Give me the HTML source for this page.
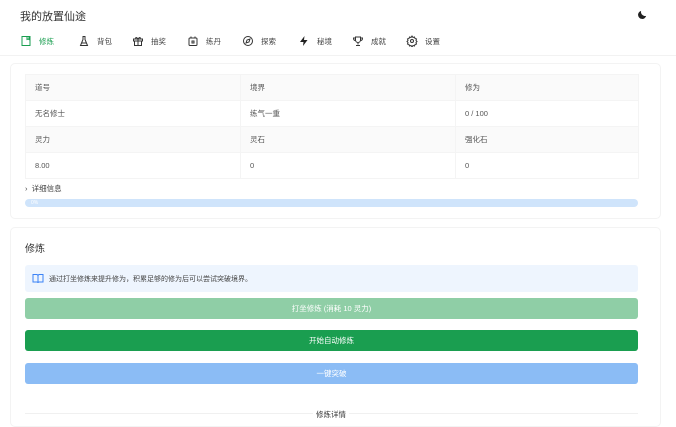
<!DOCTYPE html>
<html><head><meta charset="utf-8"><style>
*{box-sizing:border-box;margin:0;padding:0}
body{width:676px;height:418px;overflow:hidden;background:#fff;font-family:"Liberation Sans","Noto Sans CJK SC",sans-serif;color:#333;position:relative}
.abs{position:absolute}
.title{left:20px;top:8px;font-size:11px;color:#333}
.nav{top:35px;left:20px;display:flex;font-size:7.5px;color:#444}
.nav div{display:flex;align-items:center;margin-right:0}
.nav svg{width:12px;height:12px;margin-right:7px}
.hdr{left:0;top:55px;width:676px;height:1px;background:#f2f2f2}
.card{border:1px solid #f3f3f3;border-radius:5px;background:#fff}
table{border-collapse:collapse;font-size:7.5px;color:#555;table-layout:fixed}
td{height:26px;padding-left:9px;border:1px solid #f4f4f4}
tr.h td{background:#fafafa}
.btn{left:25px;width:613px;height:21px;border-radius:3px;color:#fff;font-size:7.5px;display:flex;align-items:center;justify-content:center}
</style></head><body>
<div class="abs title">我的放置仙途</div>
<svg class="abs" style="left:637px;top:9px" width="11" height="11" viewBox="0 0 24 24"><path d="M20 15A9 9 0 0 1 9 4a9 9 0 1 0 11 11z" fill="#222"/></svg>
<div class="abs nav">
<div style="color:#1a9e50;width:58px"><svg viewBox="0 0 24 24" fill="none" stroke="#1a9e50" stroke-width="2"><rect x="4" y="3" width="16" height="18"/><path d="M14 3v6l2-1 2 1V3"/></svg>修炼</div>
<div style="width:54px"><svg viewBox="0 0 24 24" fill="none" stroke="#333" stroke-width="2"><path d="M9 3h6M10 3v6l-5 12h14l-5-12V3M7 16h10"/></svg>背包</div>
<div style="width:55px"><svg viewBox="0 0 24 24" fill="none" stroke="#333" stroke-width="2"><rect x="3" y="8" width="18" height="4"/><rect x="5" y="12" width="14" height="9"/><path d="M12 8v13M12 8C9 3 6 5 8 8M12 8c3-5 6-3 4 0"/></svg>抽奖</div>
<div style="width:55px"><svg viewBox="0 0 24 24" fill="none" stroke="#333" stroke-width="2"><rect x="4" y="6" width="16" height="15" rx="2"/><path d="M8 6V3M16 6V3"/><rect x="10" y="12" width="4" height="4"/></svg>练丹</div>
<div style="width:56px"><svg viewBox="0 0 24 24" fill="none" stroke="#333" stroke-width="2"><circle cx="12" cy="12" r="9"/><path d="M16 8l-2 6-6 2 2-6z"/></svg>探索</div>
<div style="width:54px"><svg viewBox="0 0 24 24" fill="#222"><path d="M13 2L4 14h7l-1 8 9-12h-7z"/></svg>秘境</div>
<div style="width:54px"><svg viewBox="0 0 24 24" fill="none" stroke="#333" stroke-width="2"><path d="M7 4h10v6a5 5 0 0 1-10 0zM7 6H3c0 4 2 5 4 5M17 6h4c0 4-2 5-4 5M12 15v4M8 21h8"/></svg>成就</div>
<div><svg viewBox="0 0 24 24" fill="none" stroke="#333" stroke-width="2"><circle cx="12" cy="12" r="3"/><path d="M12 2l2 3 3-1 1 3 3 1-1 3 2 2-2 2 1 3-3 1-1 3-3-1-2 3-2-3-3 1-1-3-3-1 1-3-2-2 2-2-1-3 3-1 1-3 3 1z"/></svg>设置</div>
</div>
<div class="abs hdr"></div>
<div class="abs card" style="left:10px;top:63px;width:651px;height:156px"></div>
<table class="abs" style="left:25px;top:74px;width:613px">
<colgroup><col style="width:215px"><col style="width:215px"><col style="width:183px"></colgroup>
<tr class="h"><td>道号</td><td>境界</td><td>修为</td></tr>
<tr><td>无名修士</td><td>练气一重</td><td>0 / 100</td></tr>
<tr class="h"><td>灵力</td><td>灵石</td><td>强化石</td></tr>
<tr><td>8.00</td><td>0</td><td>0</td></tr>
</table>
<div class="abs" style="left:25px;top:183px;font-size:7.5px;color:#444">›&nbsp; 详细信息</div>
<div class="abs" style="left:25px;top:199px;width:613px;height:8px;border-radius:4px;background:#cfe4fb;font-size:5px;color:#fff;padding-left:6px;line-height:8px">0%</div>
<div class="abs card" style="left:10px;top:227px;width:651px;height:200px"></div>
<div class="abs" style="left:25px;top:240px;font-size:10px;color:#333">修炼</div>
<div class="abs" style="left:25px;top:265px;width:613px;height:27px;background:#eef5fe;border-radius:3px;font-size:7px;color:#444;display:flex;align-items:center;padding-left:7px">
<svg width="12" height="11" viewBox="0 0 24 22" fill="none" stroke="#3b82f6" stroke-width="2" style="margin-right:5px"><path d="M2 3h7a3 3 0 0 1 3 3v14a2 2 0 0 0-2-2H2zM22 3h-7a3 3 0 0 0-3 3v14a2 2 0 0 1 2-2h8z"/></svg>通过打坐修炼来提升修为，积累足够的修为后可以尝试突破境界。</div>
<div class="abs btn" style="top:298px;background:#8fcea6">打坐修炼 (消耗 10 灵力)</div>
<div class="abs btn" style="top:330px;background:#1a9e50">开始自动修炼</div>
<div class="abs btn" style="top:363px;background:#8bbcf5">一键突破</div>
<div class="abs" style="left:25px;top:413px;width:613px;height:1px;background:#f0f0f0"></div>
<div class="abs" style="left:313px;top:409px;font-size:7.5px;color:#333;background:#fff;padding:0 3px">修炼详情</div>
</body></html>
